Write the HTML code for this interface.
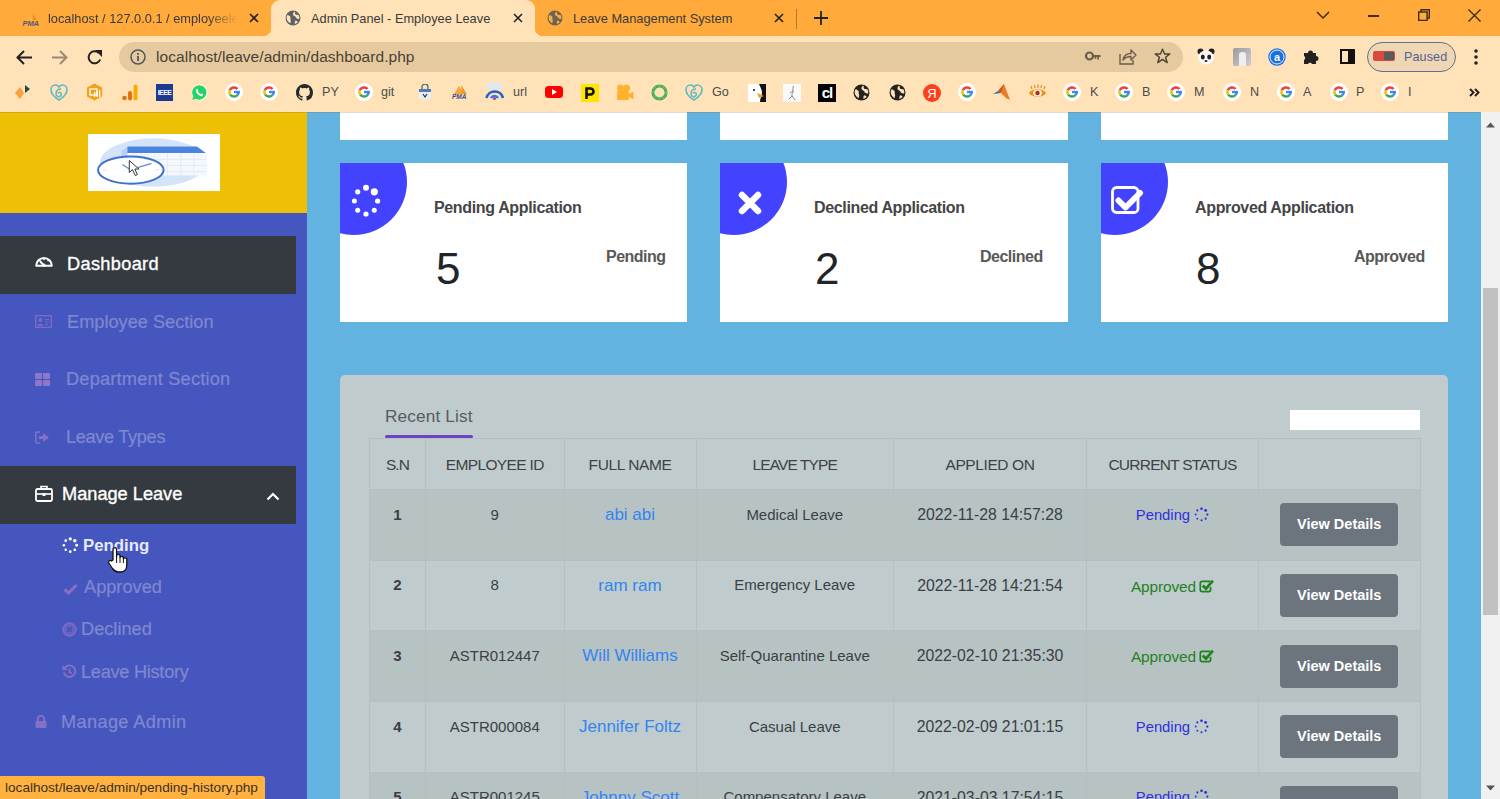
<!DOCTYPE html>
<html><head><meta charset="utf-8">
<style>
*{box-sizing:border-box;margin:0;padding:0}
html,body{width:1500px;height:799px;overflow:hidden;font-family:"Liberation Sans",sans-serif;background:#62b3df}
.abs{position:absolute}
#tabs{position:absolute;left:0;top:0;width:1500px;height:36px;background:#ffaa3b}
#toolbar{position:absolute;left:0;top:36px;width:1500px;height:40px;background:#ffe2b8}
#bmarks{position:absolute;left:0;top:76px;width:1500px;height:36px;background:#ffe2b8}
.ttl{font-size:12.8px;color:#3a3a3a;white-space:nowrap}
.bt{top:8.5px;font-size:12.6px;color:#4c4c4c;white-space:nowrap}
#page{position:absolute;left:0;top:112px;width:1500px;height:687px;background:#62b3df;overflow:hidden}
#side{position:absolute;left:0;top:0;width:307px;height:687px;background:#4656bf}
#logo{position:absolute;left:0;top:0;width:307px;height:101px;background:#edc006}
#scroll{position:absolute;left:1481px;top:0;width:19px;height:687px;background:#f1f1f1}
.card{position:absolute;background:#fff;overflow:hidden}

.sb{font-size:18.2px;color:#7f88d0;white-space:nowrap;-webkit-text-stroke:0.2px #7f88d0}
.sb.act{-webkit-text-stroke:0.35px #fff}
.sb.act{color:#fff}
.circ{position:absolute;left:-40px;top:-34px;width:107px;height:106px;border-radius:50%;background:#4343ff}
.ct{font-size:16px;font-weight:bold;color:#454545;white-space:nowrap;letter-spacing:-0.35px}
.cn{font-size:44px;color:#212529;line-height:1}
.cs{font-size:16px;padding-top:1px;letter-spacing:-0.5px;font-weight:bold;color:#585858;white-space:nowrap}
table.tb{position:absolute;border-collapse:collapse;table-layout:fixed;width:1050.5px}
.tb th,.tb td{text-align:center;border:1px solid #b3bfc0;white-space:nowrap;vertical-align:top;color:#333}
.tb th{height:51px;font-weight:normal;font-size:15.5px;letter-spacing:-0.4px;padding-top:17px;color:#3d4246}
.tb td{height:70.7px;font-size:15px;padding-top:15.7px;color:#3a3f44}
.tb td.dt{font-size:15.8px;padding-top:16px}
.tb tr.st td{background:#b7c2c3}
.tb td.sn{font-weight:bold}
.tb td.nm{color:#3484f2;font-size:17px;padding-top:15px}
.tb td.pd{color:#2f2fe0;font-size:14.8px;padding-top:16.5px}
.tb td.ap{color:#1f821f;font-size:15.4px;letter-spacing:-0.1px;padding-top:17px}
.btn{display:inline-block;width:118px;height:43px;margin-top:-2.5px;background:#6c757d;border-radius:4px;color:#fff;font-weight:bold;font-size:14.5px;line-height:43px}
</style></head><body>
<div id="tabs">
  <!-- tab 1 -->
  <svg class="abs" style="left:21px;top:10px" width="20" height="17" viewBox="0 0 20 17">
    <path d="M9 3 L13 10 L5 10 Z" fill="#fbb040"/><path d="M12 3.5 L16 10 L11.5 10 Z" fill="#f5901a"/>
    <text x="1.5" y="16" font-family="Liberation Sans" font-style="italic" font-weight="bold" font-size="7.6" fill="#56587a" textLength="16.5">PMA</text>
  </svg>
  <div class="abs ttl" style="left:48px;top:11px;width:194px;overflow:hidden;white-space:nowrap;-webkit-mask-image:linear-gradient(90deg,#000 82%,transparent 98%)">localhost / 127.0.0.1 / employeeleave</div>
  <svg class="abs" style="left:249px;top:13px" width="10" height="10" viewBox="0 0 10 10"><path d="M1 1L9 9M9 1L1 9" stroke="#222" stroke-width="1.6"/></svg>
  <!-- active tab -->
  <div class="abs" style="left:271px;top:0;width:264px;height:37px;background:#ffe2b8;border-radius:9px 9px 0 0"></div>
  <div class="abs" style="left:263px;top:28px;width:8px;height:8px;background:radial-gradient(circle at 0 0,#ffaa3b 8px,#ffe2b8 8.5px)"></div>
  <div class="abs" style="left:535px;top:28px;width:8px;height:8px;background:radial-gradient(circle at 100% 0,#ffaa3b 8px,#ffe2b8 8.5px)"></div>
  <svg class="abs globe" style="left:285px;top:10px" width="16" height="16" viewBox="0 0 16 16"><circle cx="8" cy="8" r="7.5" fill="#5f6368"/><path d="M2.2 5.2C3.5 5 4.5 5.6 5.2 6.6C5.8 7.6 5 8.6 5.6 9.6C6.1 10.5 5.6 12 5.2 13.3C3.2 12.2 1.8 10.3 1.6 8C1.5 7 1.8 6 2.2 5.2Z M9.8 1.4C10.5 2.4 9.6 3.4 10.4 4.3C11.2 5 12.6 4.8 13.8 5.2C14.3 6.2 14.5 7.6 14.3 8.8C13.3 9.2 12.2 8.9 11.5 8.3C10.6 7.6 10.8 6.5 9.6 6.1C8.6 5.8 7.8 5 8 3.8C8.1 2.8 8.8 1.8 9.8 1.4Z M10.5 10.5C11.5 10.6 12.5 11.2 12.8 12.2C12 13 11 13.6 10 14C9.6 13 9.8 11.2 10.5 10.5Z" fill="#ffe2b8"/></svg>
  <div class="abs ttl" style="left:311px;top:11px">Admin Panel - Employee Leave</div>
  <svg class="abs" style="left:513px;top:13px" width="10" height="10" viewBox="0 0 10 10"><path d="M1 1L9 9M9 1L1 9" stroke="#222" stroke-width="1.6"/></svg>
  <!-- tab 3 -->
  <svg class="abs globe" style="left:547px;top:10px" width="16" height="16" viewBox="0 0 16 16"><circle cx="8" cy="8" r="7.5" fill="#6b6458"/><path d="M2.2 5.2C3.5 5 4.5 5.6 5.2 6.6C5.8 7.6 5 8.6 5.6 9.6C6.1 10.5 5.6 12 5.2 13.3C3.2 12.2 1.8 10.3 1.6 8C1.5 7 1.8 6 2.2 5.2Z M9.8 1.4C10.5 2.4 9.6 3.4 10.4 4.3C11.2 5 12.6 4.8 13.8 5.2C14.3 6.2 14.5 7.6 14.3 8.8C13.3 9.2 12.2 8.9 11.5 8.3C10.6 7.6 10.8 6.5 9.6 6.1C8.6 5.8 7.8 5 8 3.8C8.1 2.8 8.8 1.8 9.8 1.4Z M10.5 10.5C11.5 10.6 12.5 11.2 12.8 12.2C12 13 11 13.6 10 14C9.6 13 9.8 11.2 10.5 10.5Z" fill="#ffaa3b"/></svg>
  <div class="abs ttl" style="left:573px;top:11px">Leave Management System</div>
  <svg class="abs" style="left:774px;top:13px" width="10" height="10" viewBox="0 0 10 10"><path d="M1 1L9 9M9 1L1 9" stroke="#222" stroke-width="1.6"/></svg>
  <div class="abs" style="left:796px;top:9px;width:1px;height:20px;background:#b07a30"></div>
  <svg class="abs" style="left:814px;top:11px" width="14" height="14" viewBox="0 0 14 14"><path d="M7 0V14M0 7H14" stroke="#222" stroke-width="1.8"/></svg>
  <!-- window controls -->
  <svg class="abs" style="left:1316px;top:10px" width="14" height="10" viewBox="0 0 14 10"><path d="M1 2L7 8L13 2" fill="none" stroke="#3b2c14" stroke-width="1.5"/></svg>
  <div class="abs" style="left:1368px;top:15px;width:11px;height:1.6px;background:#3b2c14"></div>
  <svg class="abs" style="left:1418px;top:9px" width="12" height="12" viewBox="0 0 12 12"><rect x="0.7" y="3" width="8.4" height="8.4" fill="none" stroke="#3b2c14" stroke-width="1.4"/><path d="M3 3V0.7H11.3V9H9" fill="none" stroke="#3b2c14" stroke-width="1.4"/></svg>
  <svg class="abs" style="left:1468px;top:9px" width="13" height="13" viewBox="0 0 13 13"><path d="M0.5 0.5L12.5 12.5M12.5 0.5L0.5 12.5" stroke="#3b2c14" stroke-width="1.4"/></svg>
</div>
<div id="toolbar">
  <svg class="abs" style="left:16px;top:14px" width="17" height="15" viewBox="0 0 17 15"><path d="M16 7.5H2M8 1L1.5 7.5L8 14" fill="none" stroke="#222" stroke-width="2"/></svg>
  <svg class="abs" style="left:51px;top:14px" width="17" height="15" viewBox="0 0 17 15"><path d="M1 7.5H15M9 1L15.5 7.5L9 14" fill="none" stroke="#9a8a74" stroke-width="2"/></svg>
  <svg class="abs" style="left:86px;top:13px" width="17" height="17" viewBox="0 0 17 17"><path d="M14.2 10.5 A6 6 0 1 1 12.8 4" fill="none" stroke="#222" stroke-width="2"/><path d="M9 1H16V8Z" fill="#222"/></svg>
  <div class="abs" style="left:119px;top:6px;width:1064px;height:30px;background:#e6ca9f;border-radius:15px"></div>
  <svg class="abs" style="left:130px;top:13px" width="16" height="16" viewBox="0 0 16 16"><circle cx="8" cy="8" r="7" fill="none" stroke="#555" stroke-width="1.5"/><rect x="7.1" y="7" width="1.8" height="5" fill="#555"/><rect x="7.1" y="4" width="1.8" height="1.8" fill="#555"/></svg>
  <div class="abs" style="left:156px;top:12px;font-size:15.5px;color:#4a4034;letter-spacing:0.05px">localhost/leave/admin/dashboard.php</div>
  <!-- key -->
  <svg class="abs" style="left:1085px;top:15px" width="16" height="10" viewBox="0 0 16 10"><circle cx="4.5" cy="5" r="3.5" fill="none" stroke="#6b5e4c" stroke-width="2.2"/><path d="M8 4H15.5V6H14V8.5H12.3V6H11.3V7.8H9.6V6H8Z" fill="#6b5e4c"/></svg>
  <svg class="abs" style="left:1119px;top:12px" width="18" height="17" viewBox="0 0 18 17"><path d="M1 6V16H14V12" fill="none" stroke="#6b5e4c" stroke-width="1.4"/><path d="M4 12 C5 7 8 5.5 12 5.5V2L17 7L12 12V8.5C8.5 8.5 6 9.5 4 12Z" fill="none" stroke="#6b5e4c" stroke-width="1.4" stroke-linejoin="round"/></svg>
  <svg class="abs" style="left:1154px;top:12px" width="17" height="17" viewBox="0 0 17 17"><path d="M8.5 1.2L10.6 6H15.8L11.6 9.2L13.2 14.6L8.5 11.4L3.8 14.6L5.4 9.2L1.2 6H6.4Z" fill="none" stroke="#4a4033" stroke-width="1.4" stroke-linejoin="round"/></svg>
  <!-- extensions -->
  <svg class="abs" style="left:1197px;top:12px" width="18" height="17" viewBox="0 0 18 17"><circle cx="3.5" cy="3.5" r="3" fill="#222"/><circle cx="14.5" cy="3.5" r="3" fill="#222"/><ellipse cx="9" cy="9.5" rx="7.8" ry="7" fill="#fafafa"/><ellipse cx="5.8" cy="9" rx="2" ry="2.5" fill="#222"/><ellipse cx="12.2" cy="9" rx="2" ry="2.5" fill="#222"/><ellipse cx="9" cy="13" rx="1.5" ry="1" fill="#222"/></svg>
  <div class="abs" style="left:1233px;top:12px;width:18px;height:18px;background:linear-gradient(135deg,#9b9b9b,#cfcfcf);border-radius:2px"><div class="abs" style="left:6px;top:4px;width:7px;height:14px;background:#eee;border-radius:3px 3px 0 0"></div></div>
  <svg class="abs" style="left:1268px;top:12px" width="18" height="18" viewBox="0 0 18 18"><circle cx="9" cy="9" r="8.7" fill="#1a6fe0"/><circle cx="9" cy="9" r="7" fill="none" stroke="#fff" stroke-width="0.9"/><text x="9" y="12.8" text-anchor="middle" font-family="Liberation Sans" font-weight="bold" font-size="11" fill="#fff">a</text></svg>
  <svg class="abs" style="left:1303px;top:12px" width="17" height="17" viewBox="0 0 17 17"><path d="M1 5H5A2.5 2.5 0 0 1 10 5H13V8A2.5 2.5 0 0 1 13 13V16H9A2.3 2.3 0 0 0 5 16H1V12A2.3 2.3 0 0 0 1 8Z" fill="#222"/></svg>
  <div class="abs" style="left:1340px;top:13px;width:15px;height:15px;border:2px solid #111;border-left-width:2px"><div class="abs" style="left:6px;top:0;width:5px;height:11px;background:#111"></div></div>
  <div class="abs" style="left:1367px;top:6px;width:89px;height:30px;border:1.8px solid #5d7090;border-radius:15px;background:#efd6b5"></div>
  <div class="abs" style="left:1373px;top:15px;width:22px;height:10px;background:#d94a3a;border-radius:2px"><div class="abs" style="left:11px;top:1px;width:10px;height:8px;background:#5a5a5a"></div></div>
  <div class="abs" style="left:1404px;top:13.5px;font-size:12.6px;color:#55618f;letter-spacing:0.1px">Paused</div>
  <svg class="abs" style="left:1473px;top:12px" width="6" height="18" viewBox="0 0 6 18"><circle cx="3" cy="3" r="1.8" fill="#222"/><circle cx="3" cy="9" r="1.8" fill="#222"/><circle cx="3" cy="15" r="1.8" fill="#222"/></svg>
</div>
<div id="bmarks">
  <svg width="0" height="0" style="position:absolute"><defs>
    <symbol id="gg" viewBox="0 0 18 18"><circle cx="9" cy="9" r="9" fill="#fff"/>
      <g fill="none" stroke-width="2.5">
      <path d="M12.52 6.04A4.6 4.6 0 0 0 4.68 7.43" stroke="#ea4335"/>
      <path d="M4.68 7.43A4.6 4.6 0 0 0 5.23 11.64" stroke="#fbbc05"/>
      <path d="M5.23 11.64A4.6 4.6 0 0 0 12.52 11.96" stroke="#34a853"/>
      <path d="M12.52 11.96A4.6 4.6 0 0 0 13.6 9" stroke="#4285f4"/></g>
      <rect x="9" y="7.8" width="5.9" height="2.4" fill="#4285f4"/>
    </symbol>
    <symbol id="globe2" viewBox="0 0 16 16"><circle cx="8" cy="8" r="7.5" fill="#222"/><path d="M2.2 5.2C3.5 5 4.5 5.6 5.2 6.6C5.8 7.6 5 8.6 5.6 9.6C6.1 10.5 5.6 12 5.2 13.3C3.2 12.2 1.8 10.3 1.6 8C1.5 7 1.8 6 2.2 5.2Z M9.8 1.4C10.5 2.4 9.6 3.4 10.4 4.3C11.2 5 12.6 4.8 13.8 5.2C14.3 6.2 14.5 7.6 14.3 8.8C13.3 9.2 12.2 8.9 11.5 8.3C10.6 7.6 10.8 6.5 9.6 6.1C8.6 5.8 7.8 5 8 3.8C8.1 2.8 8.8 1.8 9.8 1.4Z M10.5 10.5C11.5 10.6 12.5 11.2 12.8 12.2C12 13 11 13.6 10 14C9.6 13 9.8 11.2 10.5 10.5Z" fill="#ffe2b8"/></symbol>
  </defs></svg>
  <!-- 24 -->
  <svg class="abs" style="left:15px;top:84px;top:8px" width="18" height="16" viewBox="0 0 18 16"><path d="M0 9L5 3L9 9L5 15Z" fill="#f7a23c"/><path d="M10 1L15 5L10 9Z" fill="#1f4a4a"/></svg>
  <!-- 59 teal -->
  <svg class="abs" style="left:50px;top:8px" width="18" height="17" viewBox="0 0 18 17"><path d="M9 16C4 13 1 10 1 5.5C1 3 3 1 5.5 1C7 1 8.3 2 9 3C9.7 2 11 1 12.5 1C15 1 17 3 17 5.5C17 10 14 13 9 16Z" fill="none" stroke="#5fb8c4" stroke-width="1.6"/><path d="M11 5C8 5 6 7 6 10C6 12 8 13 9.5 12.5C11 12 12 10.5 11 9C10 8 8.5 8.5 8 9.5" fill="none" stroke="#5fb8c4" stroke-width="1.5"/></svg>
  <!-- 94 orange -->
  <svg class="abs" style="left:86px;top:7px" width="17" height="18" viewBox="0 0 17 18"><path d="M8.5 0.5L16 4.5V13.5L8.5 17.5L1 13.5V4.5Z" fill="#f0a21a"/><rect x="4" y="6" width="7" height="6" fill="none" stroke="#fff" stroke-width="1.3"/><rect x="8" y="9" width="1.3" height="5" fill="#fff"/><rect x="10.5" y="8" width="1.3" height="6" fill="#fff"/><rect x="13" y="7" width="1.3" height="7" fill="#fff"/></svg>
  <!-- 129 bars -->
  <svg class="abs" style="left:122px;top:8px" width="16" height="17" viewBox="0 0 16 17"><circle cx="2.5" cy="14" r="2.3" fill="#e8710a"/><rect x="6" y="7" width="4" height="9.5" rx="2" fill="#e8710a"/><rect x="11.5" y="0.5" width="4" height="16" rx="2" fill="#f9ab00"/></svg>
  <!-- 164 IEEE -->
  <div class="abs" style="left:156px;top:8px;width:17px;height:17px;background:#1a3b8f;color:#fff;font-size:7px;font-weight:bold;line-height:17px;text-align:center;letter-spacing:-0.6px">IEEE</div>
  <!-- 199 whatsapp -->
  <svg class="abs" style="left:191px;top:8px" width="17" height="17" viewBox="0 0 17 17"><circle cx="8.5" cy="8.5" r="8" fill="#fff"/><path d="M8.5 1.2A7.2 7.2 0 0 0 2.3 12.2L1.3 15.8L5 14.8A7.2 7.2 0 1 0 8.5 1.2Z" fill="#25d366"/><path d="M5.8 4.8C6.3 4.5 6.7 4.7 7 5.5L7.4 6.5C7.5 6.9 7 7.3 6.9 7.6C7.5 8.8 8.3 9.6 9.5 10.2C9.8 10 10.2 9.5 10.5 9.6L11.6 10.1C12.2 10.4 12.3 10.8 12 11.3C11.4 12.2 10.5 12.4 9.6 12C7.5 11.1 5.9 9.5 5 7.4C4.6 6.3 5 5.3 5.8 4.8Z" fill="#fff"/></svg>
  <svg class="abs" style="left:225px;top:7px" width="18" height="18"><use href="#gg"/></svg>
  <svg class="abs" style="left:260px;top:7px" width="18" height="18"><use href="#gg"/></svg>
  <!-- github -->
  <svg class="abs" style="left:296px;top:8px" width="17" height="17" viewBox="0 0 16 16"><path d="M8 0C3.58 0 0 3.58 0 8c0 3.54 2.29 6.53 5.47 7.59.4.07.55-.17.55-.38 0-.19-.01-.82-.01-1.49-2.01.37-2.53-.49-2.69-.94-.09-.23-.48-.94-.82-1.13-.28-.15-.68-.52-.01-.53.63-.01 1.08.58 1.23.82.72 1.21 1.87.87 2.33.66.07-.52.28-.87.51-1.07-1.78-.2-3.64-.89-3.640-3.95 0-.87.31-1.59.82-2.15-.08-.2-.36-1.02.08-2.12 0 0 .67-.21 2.2.82.64-.18 1.32-.27 2-.27.68 0 1.36.09 2 .27 1.53-1.04 2.2-.82 2.2-.82.44 1.1.16 1.92.08 2.12.51.56.82 1.27.82 2.15 0 3.07-1.87 3.75-3.65 3.95.29.25.54.73.54 1.48 0 1.07-.01 1.93-.01 2.2 0 .21.15.46.55.38A8.013 8.013 0 0016 8c0-4.42-3.58-8-8-8z" fill="#24292f"/></svg>
  <div class="abs bt" style="left:322px">PY</div>
  <svg class="abs" style="left:355px;top:7px" width="18" height="18"><use href="#gg"/></svg>
  <div class="abs bt" style="left:381px">git</div>
  <!-- bag 425 -->
  <svg class="abs" style="left:418px;top:8px" width="14" height="16" viewBox="0 0 14 16"><path d="M4 5V3A3 3 0 0 1 10 3V5" fill="none" stroke="#567" stroke-width="1.3"/><rect x="1" y="5" width="12" height="10" rx="1" fill="#e8eef5"/><rect x="1" y="5" width="12" height="3" fill="#4a7fb5"/><path d="M5 10L7 13L9 10" fill="none" stroke="#333" stroke-width="1.2"/></svg>
  <!-- PMA 460 -->
  <svg class="abs" style="left:450px;top:8px" width="20" height="16" viewBox="0 0 20 16"><path d="M9 2 L14 10 L4 10 Z" fill="#f7a83c"/><path d="M11 1 L17 10 L12 10 Z" fill="#f39a2a"/><text x="2" y="15" font-family="Liberation Sans" font-style="italic" font-weight="bold" font-size="6.5" fill="#3b4a8f">PMA</text></svg>
  <!-- wifi 494 -->
  <svg class="abs" style="left:485px;top:7px" width="19" height="18" viewBox="0 0 19 18"><rect x="2" y="0" width="15" height="6" fill="#dce8f5"/><path d="M1.5 15A8.5 8.5 0 0 1 18 15" fill="none" stroke="#1e5fd6" stroke-width="2.6"/><path d="M6 15A4 4 0 0 1 13 15" fill="none" stroke="#2a7ae8" stroke-width="2.4"/><circle cx="9.5" cy="15.5" r="1.6" fill="#c0389b"/></svg>
  <div class="abs bt" style="left:513px">url</div>
  <!-- youtube -->
  <svg class="abs" style="left:545px;top:9px" width="18" height="14" viewBox="0 0 18 14"><rect x="0" y="1" width="18" height="12" rx="3.5" fill="#f00"/><path d="M7 4V10L12 7Z" fill="#fff"/></svg>
  <!-- P yellow -->
  <div class="abs" style="left:581px;top:8px;width:18px;height:18px;background:#ffe400"><svg class="abs" style="left:4px;top:3px" width="10" height="12" viewBox="0 0 10 12"><path d="M1.5 12V1.5H5.5A3 3 0 0 1 5.5 7.5H1.5" fill="none" stroke="#111" stroke-width="2.6"/></svg></div>
  <!-- cam -->
  <svg class="abs" style="left:616px;top:8px" width="18" height="17" viewBox="0 0 18 17"><circle cx="4.5" cy="4" r="3.5" fill="#ffb22e"/><circle cx="10.5" cy="4" r="3.5" fill="#ffb22e"/><rect x="1" y="7" width="12" height="9" rx="1.5" fill="#ffb22e"/><path d="M13 10L17.5 7.5V15.5L13 13Z" fill="#ffb22e"/></svg>
  <!-- ring -->
  <svg class="abs" style="left:651px;top:8px" width="17" height="17" viewBox="0 0 17 17"><circle cx="8.5" cy="8.5" r="6.6" fill="none" stroke="#4cae4f" stroke-width="3"/><circle cx="8.5" cy="8.5" r="6.6" fill="none" stroke="#8bd08d" stroke-width="1" stroke-dasharray="2 3"/></svg>
  <svg class="abs" style="left:685px;top:8px" width="18" height="17" viewBox="0 0 18 17"><path d="M9 16C4 13 1 10 1 5.5C1 3 3 1 5.5 1C7 1 8.3 2 9 3C9.7 2 11 1 12.5 1C15 1 17 3 17 5.5C17 10 14 13 9 16Z" fill="none" stroke="#5fb8c4" stroke-width="1.6"/><path d="M11 5C8 5 6 7 6 10C6 12 8 13 9.5 12.5C11 12 12 10.5 11 9C10 8 8.5 8.5 8 9.5" fill="none" stroke="#5fb8c4" stroke-width="1.5"/></svg>
  <div class="abs bt" style="left:712px">Go</div>
  <!-- duck -->
  <svg class="abs" style="left:748px;top:8px" width="18" height="18" viewBox="0 0 18 18"><rect width="18" height="18" fill="#fff"/><path d="M11 0H18V18H12C12 14 14 12 14 9C14 5 12 3 11 0Z" fill="#111"/><path d="M9 9L16 12L11 14Z" fill="#f0a020"/><circle cx="6" cy="6" r="1" fill="#111"/></svg>
  <!-- sketch -->
  <div class="abs" style="left:783px;top:8px;width:18px;height:18px;background:#fafafa"><svg class="abs" style="left:3px;top:1px" width="12" height="16" viewBox="0 0 12 16"><path d="M7 1C8 3 6 4 7 6C8 8 5 9 6 11L3 14M6 11L9 15M7 6L4 8" fill="none" stroke="#777" stroke-width="0.9"/></svg></div>
  <!-- cl -->
  <div class="abs" style="left:818px;top:8px;width:18px;height:18px;background:#000;color:#fff;font-weight:bold;font-size:15px;line-height:18px;text-align:center;letter-spacing:-1px">cl</div>
  <svg class="abs" style="left:853px;top:8px" width="17" height="17"><use href="#globe2"/></svg>
  <svg class="abs" style="left:889px;top:8px" width="17" height="17"><use href="#globe2"/></svg>
  <svg class="abs" style="left:923px;top:8px" width="18" height="18" viewBox="0 0 18 18"><circle cx="9" cy="9" r="9" fill="#fc3f1d"/><text x="9" y="14" text-anchor="middle" font-family="Liberation Sans" font-size="13" fill="#fff">Я</text></svg>
  <svg class="abs" style="left:958px;top:7px" width="18" height="18"><use href="#gg"/></svg>
  <!-- matlab -->
  <svg class="abs" style="left:993px;top:8px" width="18" height="17" viewBox="0 0 18 17"><path d="M0 10L5 7L8 9Z" fill="#2a6ab8"/><path d="M5 7L11 0L17 16L13 14L8 9Z" fill="#e87a2a"/><path d="M5 7L11 0L8 9Z" fill="#c85a1a"/></svg>
  <!-- eye -->
  <svg class="abs" style="left:1028px;top:8px" width="19" height="16" viewBox="0 0 19 16"><path d="M1 9C4 4 15 4 18 9C15 14 4 14 1 9Z" fill="#f08a10"/><ellipse cx="9.5" cy="9" rx="4.5" ry="3.5" fill="#fff3d0"/><circle cx="9.5" cy="9" r="2.2" fill="#b22"/><path d="M4 5L3 2M7 4L6.5 1M10 4V0.5M13 4L13.5 1M16 5L17 2" stroke="#f08a10" stroke-width="1.2"/></svg>
  <svg class="abs" style="left:1063px;top:7px" width="18" height="18"><use href="#gg"/></svg>
  <div class="abs bt" style="left:1090px">K</div>
  <svg class="abs" style="left:1115px;top:7px" width="18" height="18"><use href="#gg"/></svg>
  <div class="abs bt" style="left:1142px">B</div>
  <svg class="abs" style="left:1167px;top:7px" width="18" height="18"><use href="#gg"/></svg>
  <div class="abs bt" style="left:1194px">M</div>
  <svg class="abs" style="left:1223px;top:7px" width="18" height="18"><use href="#gg"/></svg>
  <div class="abs bt" style="left:1250px">N</div>
  <svg class="abs" style="left:1277px;top:7px" width="18" height="18"><use href="#gg"/></svg>
  <div class="abs bt" style="left:1303px">A</div>
  <svg class="abs" style="left:1330px;top:7px" width="18" height="18"><use href="#gg"/></svg>
  <div class="abs bt" style="left:1356px">P</div>
  <svg class="abs" style="left:1381px;top:7px" width="18" height="18"><use href="#gg"/></svg>
  <div class="abs bt" style="left:1408px">I</div>
  <svg class="abs" style="left:1469px;top:12px" width="11" height="9" viewBox="0 0 11 9"><path d="M1 1L4.5 4.5L1 8M6 1L9.5 4.5L6 8" fill="none" stroke="#222" stroke-width="2"/></svg>
</div>
<div id="page">
  <div class="abs" style="left:0;top:0;width:1481px;height:1px;background:rgba(120,90,40,0.22);z-index:5"></div>
  <div id="side">
    <div id="logo">
      <div class="abs" style="left:88px;top:22px;width:132px;height:57px;background:#fff;overflow:hidden">
        <svg width="132" height="57" viewBox="0 0 131 56">
          <ellipse cx="65" cy="28" rx="53" ry="24" fill="#d3e3f8"/>
          <path d="M33 16 L39 12 H108 L118 19 V41 H33Z" fill="#f4f7fc"/><path d="M33 16 L39 12 V24 L33 26Z" fill="#b9d0f2"/>
          <path d="M39 12 H108 L117 18.5 H39Z" fill="#4a84e0"/>
          <path d="M53 19V41M66 19V41M79 19V41M92 19V41M105 19V41M39 25H118M39 31H118M39 37H118" stroke="#dde5f2" stroke-width="0.7"/>
          <ellipse cx="42.5" cy="35.5" rx="32.5" ry="13.5" fill="#fff" stroke="#3d70cf" stroke-width="2"/>
          <path d="M42 35L34 30M42 35L63 29" stroke="#6f95e0" stroke-width="1.4"/><g fill="#d8d0ec"><rect x="15" y="35" width="3" height="0.8"/><rect x="67" y="35" width="3" height="0.8"/><rect x="42" y="23" width="0.8" height="2"/><rect x="42" y="46" width="0.8" height="2"/></g>
          <path d="M41 26L41 38L44 35L47 41L49 40L46.5 34.5L50.5 34.5Z" fill="#fff" stroke="#222" stroke-width="0.9" stroke-linejoin="round"/>
        </svg>
      </div>
    </div>
    <div class="abs" style="left:0;top:124px;width:296px;height:58px;background:#343a40"></div>
    <svg class="abs" style="left:35px;top:143px" width="18" height="12" viewBox="0 0 18 12"><path d="M1.2 10.8A7.8 7.8 0 0 1 16.8 10.8Z" fill="none" stroke="#fff" stroke-width="2" stroke-linejoin="round"/><path d="M9 10.5L5 6.2" stroke="#fff" stroke-width="2"/><circle cx="9" cy="10.2" r="1.6" fill="#fff"/><path d="M9 3V5.2M4.2 5L5.4 6.3M13.8 5L12.6 6.3" stroke="#fff" stroke-width="1.3"/></svg>
    <div class="abs sb act" style="left:67px;top:142px;letter-spacing:0.33px">Dashboard</div>

    <svg class="abs" style="left:35px;top:203px;opacity:0.8" width="17" height="13" viewBox="0 0 17 13"><rect x="0.7" y="0.7" width="15.6" height="11.6" fill="none" stroke="#8670c4" stroke-width="1.4"/><circle cx="5.5" cy="5" r="2" fill="#8670c4"/><path d="M2.5 11C3 8 8 8 8.5 11Z" fill="#8670c4"/><path d="M10 4.5H14M10 7H14M10 9.5H13" stroke="#8670c4" stroke-width="1.1"/></svg>
    <div class="abs sb" style="left:67px;top:200px">Employee Section</div>

    <svg class="abs" style="left:35px;top:261px" width="15" height="13" viewBox="0 0 15 13"><rect x="0" y="0" width="7" height="6" rx="1" fill="#8f76c8"/><rect x="8" y="0" width="7" height="6" rx="1" fill="#8f76c8"/><rect x="0" y="7" width="7" height="6" rx="1" fill="#8f76c8"/><rect x="8" y="7" width="7" height="6" rx="1" fill="#8f76c8"/></svg>
    <div class="abs sb" style="left:66px;top:257px;letter-spacing:0.2px">Department Section</div>

    <svg class="abs" style="left:35px;top:319px" width="15" height="13" viewBox="0 0 15 13"><path d="M5 1H2A1.5 1.5 0 0 0 0.8 2.5V10.5A1.5 1.5 0 0 0 2 12H5" fill="none" stroke="#8670c4" stroke-width="1.5"/><path d="M4 5H8V2L14 6.5L8 11V8H4Z" fill="#8670c4"/></svg>
    <div class="abs sb" style="left:66px;top:315px;letter-spacing:-0.33px">Leave Types</div>

    <div class="abs" style="left:0;top:354px;width:296px;height:58px;background:#343a40"></div>
    <svg class="abs" style="left:35px;top:373px" width="18" height="17" viewBox="0 0 18 17"><path d="M6 4V1.5H12V4" fill="none" stroke="#fff" stroke-width="1.6"/><rect x="1" y="4" width="16" height="12" rx="1.5" fill="none" stroke="#fff" stroke-width="1.8"/><path d="M1 9H17" stroke="#fff" stroke-width="1.6"/><rect x="7.5" y="8" width="3" height="3" fill="#fff"/></svg>
    <div class="abs sb act" style="left:62px;top:372px">Manage Leave</div>
    <svg class="abs" style="left:266px;top:380px" width="14" height="9" viewBox="0 0 14 9"><path d="M1.5 7.5L7 2L12.5 7.5" fill="none" stroke="#fff" stroke-width="2.2"/></svg>

    <svg class="abs" style="left:62px;top:425px" width="16.5" height="16.5" viewBox="0 0 16 16"><g fill="#fff"><circle cx="8" cy="1.8" r="1.6"/><circle cx="12.4" cy="3.6" r="1.7"/><circle cx="14.2" cy="8" r="1.4"/><circle cx="12.4" cy="12.4" r="1.3"/><circle cx="8" cy="14.2" r="1.3"/><circle cx="3.6" cy="12.4" r="1.2"/><circle cx="1.8" cy="8" r="1.2"/><circle cx="3.6" cy="3.6" r="1.3"/></g></svg>
    <div class="abs sb" style="left:83px;top:424px;color:#e6eaff;font-weight:bold;font-size:16.8px;-webkit-text-stroke:0">Pending</div>

    <svg class="abs" style="left:63px;top:471px" width="15" height="12" viewBox="0 0 15 12"><path d="M1.5 6.5L5.5 10L13.5 2" fill="none" stroke="#8670c4" stroke-width="3"/></svg>
    <div class="abs sb" style="left:84px;top:465px">Approved</div>

    <svg class="abs" style="left:62px;top:510px;opacity:0.85" width="15" height="15" viewBox="0 0 15 15"><circle cx="7.5" cy="7.5" r="6.4" fill="#8a72c8" fill-opacity="0.55" stroke="#8670c4" stroke-width="1.6"/><path d="M5.2 5.2L9.8 9.8M9.8 5.2L5.2 9.8" stroke="#4656bf" stroke-width="2.2"/></svg>
    <div class="abs sb" style="left:81px;top:507px">Declined</div>

    <svg class="abs" style="left:62px;top:552px" width="15" height="15" viewBox="0 0 15 15"><path d="M3 3.5A5.8 5.8 0 1 1 1.8 8.5" fill="none" stroke="#8670c4" stroke-width="1.9"/><path d="M0.5 1V6H5.5Z" fill="#8670c4"/><path d="M7.5 4.5V8L10 9.5" fill="none" stroke="#8670c4" stroke-width="1.7"/></svg>
    <div class="abs sb" style="left:81px;top:549.5px;letter-spacing:-0.28px">Leave History</div>

    <svg class="abs" style="left:35px;top:603px" width="12" height="13" viewBox="0 0 12 13"><path d="M2.8 6V4A3.2 3.2 0 0 1 9.2 4V6" fill="none" stroke="#8670c4" stroke-width="2"/><rect x="0.5" y="6" width="11" height="7" rx="1" fill="#8670c4"/></svg>
    <div class="abs sb" style="left:61px;top:600px;letter-spacing:0.35px">Manage Admin</div>
  </div>

  <!-- top cards (cut) -->
  <div class="card" style="left:340px;top:-30px;width:347px;height:58px"></div>
  <div class="card" style="left:720px;top:-30px;width:348px;height:58px"></div>
  <div class="card" style="left:1101px;top:-30px;width:347px;height:58px"></div>

  <!-- stat cards -->
  <div class="card" style="left:340px;top:51px;width:347px;height:159px">
    <div class="circ"></div>
    <svg class="abs" style="left:8px;top:19px" width="36" height="38" viewBox="-2 -2 36 38"><g fill="#fff"><circle cx="16" cy="3.8" r="3"/><circle cx="24.3" cy="7.8" r="3.6"/><circle cx="27.6" cy="17" r="2.6"/><circle cx="24.3" cy="26.2" r="2.5"/><circle cx="16" cy="30" r="2.6"/><circle cx="7.7" cy="26.2" r="2.5"/><circle cx="4.4" cy="17" r="2.5"/><circle cx="7.7" cy="7.8" r="2.6"/></g></svg>
    <div class="abs ct" style="left:94px;top:36px">Pending Application</div>
    <div class="abs cn" style="left:96px;top:83.5px">5</div>
    <div class="abs cs" style="left:266px;top:84px">Pending</div>
  </div>
  <div class="card" style="left:720px;top:51px;width:348px;height:159px">
    <div class="circ"></div>
    <svg class="abs" style="left:18px;top:28px" width="24" height="24" viewBox="0 0 24 24"><path d="M4 4L20 20M20 4L4 20" stroke="#fff" stroke-width="6.5" stroke-linecap="round"/></svg>
    <div class="abs ct" style="left:94px;top:36px">Declined Application</div>
    <div class="abs cn" style="left:95px;top:83.5px">2</div>
    <div class="abs cs" style="left:260px;top:84px">Declined</div>
  </div>
  <div class="card" style="left:1101px;top:51px;width:347px;height:159px">
    <div class="circ"></div>
    <svg class="abs" style="left:9px;top:22px" width="34" height="30" viewBox="0 0 34 30"><rect x="2.5" y="2.5" width="25.5" height="25" rx="4" fill="none" stroke="#fff" stroke-width="2.8"/><path d="M8.5 15.5L15.5 22.5L30 8" fill="none" stroke="#fff" stroke-width="6" stroke-linecap="round" stroke-linejoin="round"/><path d="M26 11.5V8.5" stroke="#4343ff" stroke-width="0"/></svg>
    <div class="abs ct" style="left:94px;top:36px">Approved Application</div>
    <div class="abs cn" style="left:95px;top:83.5px">8</div>
    <div class="abs cs" style="left:253px;top:84px">Approved</div>
  </div>

  <!-- table card -->
  <div class="card" style="left:340px;top:263px;width:1108px;height:520px;background:#bfcbcc;border-radius:5px">
    <div class="abs" style="left:45px;top:31px;font-size:17.2px;color:#565c63;letter-spacing:0.15px">Recent List</div>
    <div class="abs" style="left:45px;top:60px;width:88px;height:3px;background:#6f42c1;border-radius:2px"></div>
    <div class="abs" style="left:950px;top:35px;width:130px;height:20px;background:#fff"></div>
    <table class="tb" style="left:29px;top:63px">
      <colgroup><col style="width:56px"><col style="width:138.5px"><col style="width:132px"><col style="width:197.5px"><col style="width:193px"><col style="width:172px"><col style="width:161.5px"></colgroup>
      <tr class="hd"><th style="letter-spacing:-0.9px">S.N</th><th style="letter-spacing:-0.65px">EMPLOYEE ID</th><th>FULL NAME</th><th style="letter-spacing:-0.9px">LEAVE TYPE</th><th>APPLIED ON</th><th style="letter-spacing:-0.75px">CURRENT STATUS</th><th></th></tr>
      <tr class="st"><td class="sn">1</td><td>9</td><td class="nm">abi abi</td><td>Medical Leave</td><td class="dt">2022-11-28 14:57:28</td><td class="pd">Pending <svg width="15" height="15" viewBox="0 0 16 16" style="vertical-align:-2px"><use href="#spin"/></svg></td><td><span class="btn">View Details</span></td></tr>
      <tr><td class="sn">2</td><td>8</td><td class="nm">ram ram</td><td>Emergency Leave</td><td class="dt">2022-11-28 14:21:54</td><td class="ap">Approved<svg width="15" height="15" viewBox="0 0 14 14" style="vertical-align:-1px;margin-left:3px"><use href="#chk"/></svg></td><td><span class="btn">View Details</span></td></tr>
      <tr class="st"><td class="sn">3</td><td>ASTR012447</td><td class="nm">Will Williams</td><td>Self-Quarantine Leave</td><td class="dt">2022-02-10 21:35:30</td><td class="ap">Approved<svg width="15" height="15" viewBox="0 0 14 14" style="vertical-align:-1px;margin-left:3px"><use href="#chk"/></svg></td><td><span class="btn">View Details</span></td></tr>
      <tr><td class="sn">4</td><td>ASTR000084</td><td class="nm">Jennifer Foltz</td><td>Casual Leave</td><td class="dt">2022-02-09 21:01:15</td><td class="pd">Pending <svg width="15" height="15" viewBox="0 0 16 16" style="vertical-align:-2px"><use href="#spin"/></svg></td><td><span class="btn">View Details</span></td></tr>
      <tr class="st"><td class="sn">5</td><td>ASTR001245</td><td class="nm">Johnny Scott</td><td>Compensatory Leave</td><td class="dt">2021-03-03 17:54:15</td><td class="pd">Pending <svg width="15" height="15" viewBox="0 0 16 16" style="vertical-align:-2px"><use href="#spin"/></svg></td><td><span class="btn">View Details</span></td></tr>
    </table>
  </div>

  <svg width="0" height="0" style="position:absolute"><defs>
    <symbol id="spin" viewBox="0 0 16 16"><g fill="#2a2ae0"><circle cx="8" cy="1.8" r="1.4"/><circle cx="12.4" cy="3.6" r="1.5"/><circle cx="14.2" cy="8" r="1.2"/><circle cx="12.4" cy="12.4" r="1.1"/><circle cx="8" cy="14.2" r="1.1"/><circle cx="3.6" cy="12.4" r="1"/><circle cx="1.8" cy="8" r="1"/><circle cx="3.6" cy="3.6" r="1.1"/></g></symbol>
    <symbol id="chk" viewBox="0 0 14 14"><path d="M10.5 3.2H3A1.8 1.8 0 0 0 1.2 5V11A1.8 1.8 0 0 0 3 12.8H9A1.8 1.8 0 0 0 10.8 11V8.5" fill="none" stroke="#1f821f" stroke-width="1.6"/><path d="M3.5 7L6.5 10L13 2.5" fill="none" stroke="#1f821f" stroke-width="2.6"/></symbol>
  </defs></svg>

  <!-- scrollbar -->
  <div id="scroll">
    <svg class="abs" style="left:5px;top:10px" width="9" height="6" viewBox="0 0 9 6"><path d="M0 5.5L4.5 0.5L9 5.5Z" fill="#555"/></svg>
    <div class="abs" style="left:2px;top:176px;width:15px;height:327px;background:#c1c1c1"></div>
    <svg class="abs" style="left:5px;top:673px" width="9" height="6" viewBox="0 0 9 6"><path d="M0 0.5L4.5 5.5L9 0.5Z" fill="#555"/></svg>
  </div>

  <!-- status bar -->
  <div class="abs" style="left:0;top:664px;width:265px;height:23px;background:#ffb240;border-radius:0 3px 0 0;font-size:13.6px;color:#3a3020;padding:4px 0 0 5px;white-space:nowrap">localhost/leave/admin/pending-history.php</div>
  <!-- hand cursor -->
  <svg class="abs" style="left:107px;top:434px" width="22" height="28" viewBox="0 0 22 28"><path d="M6 14V3.5A1.8 1.8 0 0 1 9.6 3.5V11V9.5A1.8 1.8 0 0 1 13 9.5V11.5A1.8 1.8 0 0 1 16.4 11.5V13A1.8 1.8 0 0 1 19.8 13V19C19.8 23 17.5 26 13.5 26H11C8.5 26 7 24.5 5.5 22.5L1.8 17A1.7 1.7 0 0 1 4.5 15Z" fill="#fff" stroke="#111" stroke-width="1.3" stroke-linejoin="round"/><path d="M9.6 11V17M13 11.5V17M16.4 13V17" stroke="#111" stroke-width="1"/></svg>
</div>
</body></html>
